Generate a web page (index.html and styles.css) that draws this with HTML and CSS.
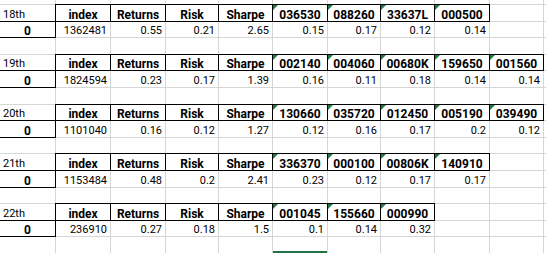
FILE: index.html
```html
<!DOCTYPE html>
<html lang="en">
<head>
<meta charset="utf-8">
<title>Sheet</title>
<link rel="stylesheet" href="styles.css">
</head>
<body>
<div class="sheet">
  <div class="row"><div class="c"></div><div class="c"></div><div class="c"></div><div class="c"></div><div class="c"></div><div class="c"></div><div class="c"></div><div class="c"></div><div class="c"></div><div class="c"></div><div class="c"></div></div>

  <div class="row"><div class="c">18th</div><div class="c h">index</div><div class="c h">Returns</div><div class="c h">Risk</div><div class="c h">Sharpe</div><div class="c h t">036530</div><div class="c h t">088260</div><div class="c h t">33637L</div><div class="c h t">000500</div><div class="c"></div><div class="c"></div></div>
  <div class="row"><div class="c z">0</div><div class="c n">1362481</div><div class="c n">0.55</div><div class="c n">0.21</div><div class="c n">2.65</div><div class="c n">0.15</div><div class="c n">0.17</div><div class="c n">0.12</div><div class="c n">0.14</div><div class="c"></div><div class="c"></div></div>
  <div class="row"><div class="c"></div><div class="c"></div><div class="c"></div><div class="c"></div><div class="c"></div><div class="c"></div><div class="c"></div><div class="c"></div><div class="c"></div><div class="c"></div><div class="c"></div></div>

  <div class="row"><div class="c">19th</div><div class="c h">index</div><div class="c h">Returns</div><div class="c h">Risk</div><div class="c h">Sharpe</div><div class="c h t">002140</div><div class="c h t">004060</div><div class="c h t">00680K</div><div class="c h t">159650</div><div class="c h t">001560</div><div class="c"></div></div>
  <div class="row"><div class="c z">0</div><div class="c n">1824594</div><div class="c n">0.23</div><div class="c n">0.17</div><div class="c n">1.39</div><div class="c n">0.16</div><div class="c n">0.11</div><div class="c n">0.18</div><div class="c n">0.14</div><div class="c n">0.14</div><div class="c"></div></div>
  <div class="row"><div class="c"></div><div class="c"></div><div class="c"></div><div class="c"></div><div class="c"></div><div class="c"></div><div class="c"></div><div class="c"></div><div class="c"></div><div class="c"></div><div class="c"></div></div>

  <div class="row"><div class="c">20th</div><div class="c h">index</div><div class="c h">Returns</div><div class="c h">Risk</div><div class="c h">Sharpe</div><div class="c h t">130660</div><div class="c h t">035720</div><div class="c h t">012450</div><div class="c h t">005190</div><div class="c h t">039490</div><div class="c"></div></div>
  <div class="row"><div class="c z">0</div><div class="c n">1101040</div><div class="c n">0.16</div><div class="c n">0.12</div><div class="c n">1.27</div><div class="c n">0.12</div><div class="c n">0.16</div><div class="c n">0.17</div><div class="c n">0.2</div><div class="c n">0.12</div><div class="c"></div></div>
  <div class="row"><div class="c"></div><div class="c"></div><div class="c"></div><div class="c"></div><div class="c"></div><div class="c"></div><div class="c"></div><div class="c"></div><div class="c"></div><div class="c"></div><div class="c"></div></div>

  <div class="row"><div class="c">21th</div><div class="c h">index</div><div class="c h">Returns</div><div class="c h">Risk</div><div class="c h">Sharpe</div><div class="c h t">336370</div><div class="c h t">000100</div><div class="c h t">00806K</div><div class="c h t">140910</div><div class="c"></div><div class="c"></div></div>
  <div class="row"><div class="c z">0</div><div class="c n">1153484</div><div class="c n">0.48</div><div class="c n">0.2</div><div class="c n">2.41</div><div class="c n">0.23</div><div class="c n">0.12</div><div class="c n">0.17</div><div class="c n">0.17</div><div class="c"></div><div class="c"></div></div>
  <div class="row"><div class="c"></div><div class="c"></div><div class="c"></div><div class="c"></div><div class="c"></div><div class="c"></div><div class="c"></div><div class="c"></div><div class="c"></div><div class="c"></div><div class="c"></div></div>

  <div class="row"><div class="c">22th</div><div class="c h">index</div><div class="c h">Returns</div><div class="c h">Risk</div><div class="c h">Sharpe</div><div class="c h t">001045</div><div class="c h t">155660</div><div class="c h t">000990</div><div class="c"></div><div class="c"></div><div class="c"></div></div>
  <div class="row"><div class="c z">0</div><div class="c n">236910</div><div class="c n">0.27</div><div class="c n">0.18</div><div class="c n">1.5</div><div class="c n">0.1</div><div class="c n">0.14</div><div class="c n">0.32</div><div class="c"></div><div class="c"></div><div class="c"></div></div>
  <div class="row"><div class="c"></div><div class="c"></div><div class="c"></div><div class="c"></div><div class="c"></div><div class="c sel"></div><div class="c"></div><div class="c"></div><div class="c"></div><div class="c"></div><div class="c"></div></div>
</div>
</body>
</html>
```
FILE: styles.css
```css
html, body {
  margin: 0;
  padding: 0;
  overflow: hidden;
  background: #fff;
}

.sheet {
  display: grid;
  grid-template-columns: 55px 54px 54px 52px 53px 54px 52px 53px 54px 53px 2px;
  grid-auto-rows: 15.6px;
  gap: 1px;
  background: #d6d6d6;
  margin-top: -11.6px;
  width: max-content;
  font-family: Roboto, "Liberation Sans", sans-serif;
  color: #000;
}

.row {
  display: contents;
}

.c {
  background: #fff;
  display: flex;
  align-items: flex-end;
  justify-content: flex-start;
  padding: 0 3px 1px;
  font-size: 11px;
  line-height: 10px;
  white-space: nowrap;
  overflow: hidden;
  min-width: 0;
}

.n {
  justify-content: flex-end;
}

.h,
.z {
  justify-content: center;
  font-weight: 700;
  font-size: 12px;
  outline: 1px solid #000;
}

.t {
  position: relative;
}

.t::before {
  content: "";
  position: absolute;
  left: 0;
  top: 0;
  border-top: 5px solid #1f7a44;
  border-right: 5px solid transparent;
}

/* active cell starts on the next row; only its top edge is in view */
.sel {
  box-shadow: inset 0 -2px 0 #217346;
}
```
